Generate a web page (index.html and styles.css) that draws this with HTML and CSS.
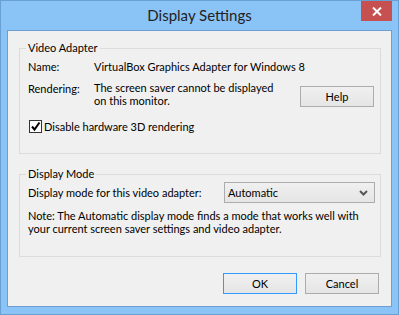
FILE: index.html
```html
<!DOCTYPE html>
<html lang="en">

<head>
    <meta charset="UTF-8">
    <meta name="viewport" content="width=device-width, initial-scale=1.0">
    <title>Display Settings</title>

    <link rel="stylesheet" href="styles.css">
</head>

<body>
    <div class="window">
        <div class="titlebar">
            <span class="title">Display Settings</span>
            <button class="close" title="Close">
                <svg width="10" height="9" viewBox="0 0 10 9">
                    <path d="M1 0.5 L9 8.5 M9 0.5 L1 8.5" stroke="#fff" stroke-width="2" fill="none" />
                </svg>
            </button>
        </div>

        <div class="client">
            <fieldset class="group adapter">
                <legend>Video Adapter</legend>
                <div class="row">
                    <span class="label">Name:</span>
                    <span>VirtualBox Graphics Adapter for Windows 8</span>
                </div>
                <div class="row render">
                    <span class="label">Rendering:</span>
                    <span class="msg">The screen saver cannot be displayed<br>on this monitor.</span>
                    <button class="btn help">Help</button>
                </div>
                <label class="check">
                    <span class="box">
                        <svg width="11" height="11" viewBox="0 0 11 11">
                            <path d="M2 5.5 L4.5 8.5 L9.5 1.5" stroke="#000" stroke-width="2" fill="none" />
                        </svg>
                    </span>
                    Disable hardware 3D rendering
                </label>
            </fieldset>

            <fieldset class="group mode">
                <legend>Display Mode</legend>
                <div class="row mode-row">
                    <span>Display mode for this video adapter:</span>
                    <div class="select">
                        <span>Automatic</span>
                        <svg width="9" height="6" viewBox="0 0 9 6">
                            <path d="M1 1 L4.5 4.5 L8 1" stroke="#555" stroke-width="2" fill="none" />
                        </svg>
                    </div>
                </div>
                <p class="note">Note: The Automatic display mode finds a mode that works well with<br>your current screen saver settings and video adapter.</p>
            </fieldset>

            <div class="actions">
                <button class="btn ok">OK</button>
                <button class="btn">Cancel</button>
            </div>
        </div>
    </div>
</body>

</html>
```

FILE: styles.css
```css
body {
    margin: 0;
    font-family: 'Lato', 'Liberation Sans', sans-serif;
    font-size: 11px;
    color: #000;
}

.window {
    width: 399px;
    height: 315px;
    box-sizing: border-box;
    border: 1px solid #6a9fd3;
    background-color: #8ac3f6;
    padding: 0 6px 7px;
    display: flex;
    flex-direction: column;
}

.titlebar {
    position: relative;
    height: 29px;
    line-height: 28px;
    text-align: center;
}

.title {
    font-size: 15px;
    color: #222;
}

.close {
    position: absolute;
    top: 0;
    right: 0;
    width: 31px;
    height: 20px;
    border: none;
    padding: 0;
    background-color: #c75050;
    display: flex;
    align-items: center;
    justify-content: center;
}

.client {
    flex: 1;
    background-color: #f0f0f0;
    border: 1px solid #6f9fd0;
    padding: 0 10px 0 11px;
}

.group {
    margin: 0;
    border: 1px solid #dcdcdc;
    padding: 4px 6px 19px 8px;
}

.group legend {
    padding: 0 2px;
    margin-left: -2px;
    line-height: 14px;
}

.adapter {
    margin-top: 10px;
}

.mode {
    margin-top: 13px;
    padding-top: 1px;
    padding-bottom: 21px;
}

.row {
    display: flex;
    line-height: 15px;
}

.label {
    width: 66px;
}

.render {
    margin-top: 7px;
    align-items: flex-start;
}

.msg {
    line-height: 13px;
}

.btn {
    width: 74px;
    height: 21px;
    border: 1px solid #acacac;
    background: linear-gradient(#f0f0f0, #e5e5e5);
    font-family: inherit;
    font-size: 11px;
    color: #000;
    padding: 0;
}

.help {
    margin-left: auto;
    margin-top: 5px;
}

.check {
    display: flex;
    align-items: center;
    gap: 2px;
    margin-top: 12px;
    margin-left: 1px;
    line-height: 15px;
}

.box {
    width: 11px;
    height: 11px;
    border: 1px solid #333;
    background-color: #fff;
    display: flex;
}

.mode-row {
    align-items: center;
}

.select {
    margin-left: auto;
    margin-right: -1px;
    width: 151px;
    height: 21px;
    box-sizing: border-box;
    border: 1px solid #acacac;
    background: linear-gradient(#f0f0f0, #e5e5e5);
    display: flex;
    align-items: center;
    justify-content: space-between;
    padding: 0 6px 0 3px;
}

.note {
    margin: 6px 0 0;
    line-height: 13px;
}

.actions {
    display: flex;
    justify-content: flex-end;
    gap: 8px;
    margin-top: 16px;
    padding-right: 2px;
}

.ok {
    border-color: #3399ff;
}
```
